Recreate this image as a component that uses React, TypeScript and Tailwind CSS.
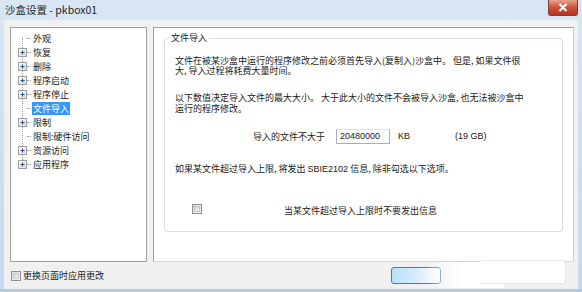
import React from 'react'

const font = "font-['Noto_Sans_CJK_SC','Liberation_Sans',sans-serif]"

const treeItems = [
    { label: '外观', plus: false },
    { label: '恢复', plus: true },
    { label: '删除', plus: true },
    { label: '程序启动', plus: true },
    { label: '程序停止', plus: true },
    { label: '文件导入', plus: false, selected: true },
    { label: '限制', plus: true },
    { label: '限制:硬件访问', plus: false },
    { label: '资源访问', plus: true },
    { label: '应用程序', plus: true }
]

function PlusBox() {
    return (
        <svg width="9" height="9" viewBox="0 0 9 9" className="relative z-10">
            <defs>
                <linearGradient id="pb" x1="0" y1="0" x2="1" y2="1">
                    <stop offset="0" stopColor="#ffffff" />
                    <stop offset="1" stopColor="#d8d8d8" />
                </linearGradient>
            </defs>
            <rect x="0.5" y="0.5" width="8" height="8" fill="url(#pb)" stroke="#a0a0a0" />
            <path d="M2.5 4.5h4M4.5 2.5v4" stroke="#2b4f8a" strokeWidth="1" />
        </svg>
    )
}

function Checkbox() {
    return (
        <span className="block h-[10px] w-[10px] border border-[#8f8f8f] bg-gradient-to-br from-[#dcdcdc] to-[#f8f8f8] p-[1px]">
            <span className="block h-full w-full border border-[#c8c8c8] bg-gradient-to-br from-[#d2d2d2] to-[#f4f4f4]" />
        </span>
    )
}

function Tree() {
    return (
        <div className="relative h-[235px] w-[137px] border border-[#a0a0a0] bg-white pt-[3px]">
            <div className="absolute left-[11px] top-[10px] h-[126px] border-l border-dotted border-[#a0a0a0]" />
            {treeItems.map((item) => (
                <div key={item.label} className="flex h-[14px] items-center">
                    <div className="relative flex w-[20px] items-center">
                        {item.plus ? (
                            <span className="ml-[7px]">
                                <PlusBox />
                            </span>
                        ) : (
                            <span className="ml-[11px] w-[5px]" />
                        )}
                        <span className="h-0 w-[4px] border-t border-dotted border-[#a0a0a0]" />
                    </div>
                    <span
                        className={
                            item.selected
                                ? 'ml-[1px] bg-[#3399ff] px-[1px] leading-[13px] text-white'
                                : 'ml-[1px] px-[1px] leading-[13px] text-[#1a1a1a]'
                        }
                    >
                        {item.label}
                    </span>
                </div>
            ))}
        </div>
    )
}

function ImportPanel() {
    return (
        <div className="h-[235px] flex-1 border border-[#a0a0a0] border-r-[#d0d0d0] border-b-[#d8d8d8] bg-white px-[10px] pt-[10px]">
            <div className="relative h-[194px] rounded-[3px] border border-[#d5dfe5] pl-[10px] pr-[8px] pt-[17px] text-[#1a1a1a]">
                <span className="absolute left-[4px] top-[-7px] bg-white px-[2px] leading-[12px]">
                    文件导入
                </span>
                <p className="leading-[10px]">
                    文件在被某沙盒中运行的程序修改之前必须首先导入(复制入)沙盒中。
                    但是, 如果文件很
                    <br />
                    大, 导入过程将耗费大量时间。
                </p>
                <p className="mt-[16px] leading-[11px]">
                    以下数值决定导入文件的最大大小。
                    大于此大小的文件不会被导入沙盒, 也无法被沙盒中
                    <br />
                    运行的程序修改。
                </p>
                <div className="mt-[15px] flex h-[15px] items-center">
                    <span className="ml-[78px]">导入的文件不大于</span>
                    <span className="ml-[11px] flex h-[15px] w-[54px] items-center border border-[#abadb3] border-t-[#e2e3ea] px-[3px] font-['Liberation_Sans',sans-serif]">
                        20480000
                    </span>
                    <span className="ml-[8px] font-['Liberation_Sans',sans-serif]">KB</span>
                    <span className="ml-[45px] font-['Liberation_Sans',sans-serif]">(19 GB)</span>
                </div>
                <p className="mt-[19px] leading-[11px]">
                    如果某文件超过导入上限, 将发出{' '}
                    <span className="font-['Liberation_Sans',sans-serif]">SBIE2102</span>{' '}
                    信息, 除非勾选以下选项。
                </p>
                <div className="mt-[25px] flex items-center">
                    <span className="ml-[17px]">
                        <Checkbox />
                    </span>
                    <span className="ml-[82px] mt-[4px]">当某文件超过导入上限时不要发出信息</span>
                </div>
            </div>
        </div>
    )
}

export default function App() {
    return (
        <div
            className={`${font} relative flex h-[292px] w-[582px] flex-col overflow-hidden bg-gradient-to-b from-[#d9e6f4] to-[#c7d9ee] text-[9px]`}
        >
            <div className="relative flex h-[20px] shrink-0 items-center pl-[5px]">
                <span className="text-[10.5px] leading-none text-[#1e1e1e]">沙盒设置 - pkbox01</span>
                <div className="absolute right-[4px] top-0 flex h-[16px] w-[30px] items-center justify-center rounded-b-[3px] border border-t-0 border-[#8b3a2e] bg-gradient-to-b from-[#e9a18d] via-[#c9503a] to-[#b9331f]">
                    <svg width="10" height="9" viewBox="0 0 10 9">
                        <path d="M1.5 1l7 7M8.5 1l-7 7" stroke="#ffffff" strokeWidth="2" />
                    </svg>
                </div>
            </div>
            <div className="mx-[4px] flex flex-1 flex-col bg-[#f0f0f0]">
                <div className="flex gap-[6px] pl-[6px] pr-[4px] pt-[7px]">
                    <Tree />
                    <ImportPanel />
                </div>
                <div className="relative flex flex-1 items-center">
                    <span className="ml-[7px]">
                        <Checkbox />
                    </span>
                    <span className="ml-[2px] text-[#1a1a1a]">更换页面时应用更改</span>
                    <div className="absolute left-[387px] top-[5px] h-[17px] w-[50px] rounded-[3px] border border-[#3c7fb1] bg-gradient-to-r from-[#b9e1fa] via-[#d5ecfb] to-white" />
                    <div className="absolute left-[420px] top-[0px] h-[26px] w-[80px] bg-gradient-to-r from-transparent via-white to-white" />
                    <div className="absolute left-[476px] top-[-2px] h-[24px] w-[86px] rounded-[3px] border border-[#e2e2e2] border-l-transparent border-t-[#ececec] bg-white" />
                </div>
            </div>
            <div className="h-[3px] shrink-0 bg-[#b9c9dc]" />
        </div>
    )
}
